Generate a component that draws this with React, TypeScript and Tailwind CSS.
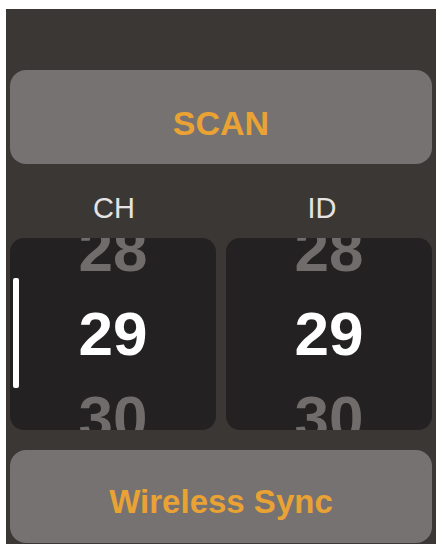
import React from "react";

const Picker = ({ showBar = false }: { showBar?: boolean }) => (
  <div className="relative flex-1 h-full rounded-[14px] bg-[#232121] overflow-hidden flex flex-col items-center justify-center">
    {showBar && <div className="absolute left-[3px] top-[40px] w-[6px] h-[110px] bg-white rounded-[2px]" />}
    <div className="h-[84px] shrink-0 flex items-center text-[62px] font-bold leading-none text-[#6f6c6b]">28</div>
    <div className="h-[84px] shrink-0 flex items-center text-[62px] font-bold leading-none text-white">29</div>
    <div className="h-[84px] shrink-0 flex items-center text-[62px] font-bold leading-none text-[#6f6c6b]">30</div>
  </div>
);

const App = () => (
  <div className="w-[442px] h-[546px] bg-white pt-[9px] pl-[6px]" style={{ fontFamily: '"Liberation Sans", Arial, sans-serif' }}>
    <div className="w-[430px] h-[535px] bg-[#3b3735] px-[4px] pt-[61px] flex flex-col">
      <button className="h-[94px] w-full shrink-0 rounded-[16px] bg-[#757271] flex items-center justify-center pt-[12px] text-[34px] font-bold text-[#e9a233] leading-none">
        SCAN
      </button>
      <div className="h-[74px] shrink-0 flex pt-[30px] text-[29px] leading-none text-[#e6e4e3]">
        <div className="flex-1 text-center">CH</div>
        <div className="flex-1 text-center pr-[6px]">ID</div>
      </div>
      <div className="h-[192px] shrink-0 flex gap-[10px]">
        <Picker showBar />
        <Picker />
      </div>
      <button className="mt-[20px] h-[93px] w-full shrink-0 rounded-[16px] bg-[#757271] flex items-center justify-center pt-[10px] text-[33px] font-bold text-[#e9a233] leading-none">
        Wireless Sync
      </button>
    </div>
  </div>
);

export default App;
